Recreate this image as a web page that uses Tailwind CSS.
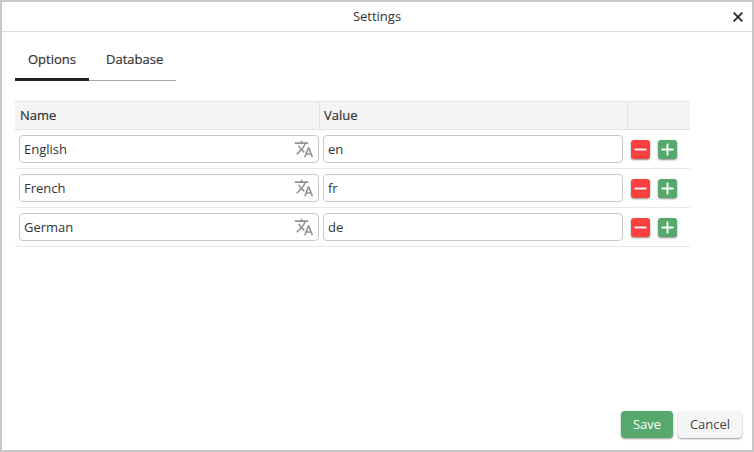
<!DOCTYPE html>
<html lang="en">
<head>
  <meta charset="UTF-8" />
  <title>Settings</title>
  <script src="https://cdn.jsdelivr.net/npm/@tailwindcss/browser@4"></script>
</head>
<body class="bg-white">

  <div class="w-[754px] h-[452px] border-2 border-[#c8c8c8] bg-white flex flex-col font-['Open_Sans',sans-serif] text-[13px] text-[#333] overflow-hidden">

    <!-- Title bar -->
    <div class="h-[30px] shrink-0 border-b border-[#ddd] flex items-center justify-center relative">
      <span class="text-[13px] leading-none -mt-[1px]">Settings</span>
      <svg class="absolute right-[9px] top-[10px] w-[10px] h-[10px]" viewBox="0 0 10 10" fill="none" stroke="#222" stroke-width="1.7"><path d="M0.7 0.7 9.3 9.3M9.3 0.7 0.7 9.3" /></svg>
    </div>

    <div class="flex-1 flex flex-col pl-[13px] pr-[10px]">
      <!-- Tabs -->
      <div class="mt-[16px] w-[161px] h-[33px] flex border-b border-[#aaa]">
        <div class="w-[74px] h-[33px] border-b-[3px] border-[#222] text-center leading-[22px] font-medium [-webkit-text-stroke:0.2px] text-[13px]">Options</div>
        <div class="w-[87px] pl-[17px] leading-[22px] font-medium [-webkit-text-stroke:0.2px] text-[13px]">Database</div>
      </div>

      <!-- Table -->
      <div class="mt-[20px] w-[675px]">
        <div class="h-[29px] flex bg-[#f4f4f4] border-y border-[#e2e2e2] font-medium [-webkit-text-stroke:0.2px] text-[13px] leading-[27px] text-[#333]">
          <div class="w-[305px] pl-[5px] border-r border-[#e2e2e2]">Name</div>
          <div class="w-[308px] pl-[4px] border-r border-[#e2e2e2]">Value</div>
          <div class="flex-1"></div>
        </div>

        <!-- English -->
        <div class="h-[39px] flex items-center border-b border-[#e8e8e8]">
          <div class="w-[300px] h-[28px] ml-[4px] rounded-[4px] border border-[#c8c8c8] flex items-center justify-between pl-[4px] pr-[3px]">
            <span class="text-[13px] pt-[1px]">English</span>
            <svg class="w-[20px] h-[20px] mr-[1px]" viewBox="0 0 24 24" fill="#919191"><path d="M12.87 15.07l-2.54-2.51.03-.03c1.74-1.94 2.98-4.17 3.71-6.53H17V4h-7V2H8v2H1v1.99h11.17C11.5 7.92 10.44 9.75 9 11.35 8.07 10.32 7.3 9.19 6.69 8h-2c.73 1.63 1.73 3.17 2.98 4.56l-5.09 5.02L4 19l5-5 3.11 3.11.76-2.04zM18.5 10h-2L12 22h2l1.12-3h4.75L21 22h2l-4.5-12zm-2.62 7l1.62-4.33L19.12 17h-3.24z" /></svg>
          </div>
          <div class="w-[300px] h-[28px] ml-[4px] rounded-[4px] border border-[#c8c8c8] flex items-center pl-[4px] pt-[1px] text-[13px]">en</div>
          <div class="ml-[8px] flex gap-[8px]">
            <div class="w-[19px] h-[19px] rounded-[3px] bg-[#fb4040] shadow-[0_1px_2px_rgba(0,0,0,0.45)] flex items-center justify-center">
              <svg class="w-[13px] h-[13px]" viewBox="0 0 13 13" stroke="#fff" stroke-width="1.8"><path d="M0.5 6.5h12" /></svg>
            </div>
            <div class="w-[19px] h-[19px] rounded-[3px] bg-[#56a86c] shadow-[0_1px_2px_rgba(0,0,0,0.45)] flex items-center justify-center">
              <svg class="w-[13px] h-[13px]" viewBox="0 0 13 13" stroke="#fff" stroke-width="1.8"><path d="M0.5 6.5h12M6.5 0.5v12" /></svg>
            </div>
          </div>
        </div>

        <!-- French -->
        <div class="h-[39px] flex items-center border-b border-[#e8e8e8]">
          <div class="w-[300px] h-[28px] ml-[4px] rounded-[4px] border border-[#c8c8c8] flex items-center justify-between pl-[4px] pr-[3px]">
            <span class="text-[13px] pt-[1px]">French</span>
            <svg class="w-[20px] h-[20px] mr-[1px]" viewBox="0 0 24 24" fill="#919191"><path d="M12.87 15.07l-2.54-2.51.03-.03c1.74-1.94 2.98-4.17 3.71-6.53H17V4h-7V2H8v2H1v1.99h11.17C11.5 7.92 10.44 9.75 9 11.35 8.07 10.32 7.3 9.19 6.69 8h-2c.73 1.63 1.73 3.17 2.98 4.56l-5.09 5.02L4 19l5-5 3.11 3.11.76-2.04zM18.5 10h-2L12 22h2l1.12-3h4.75L21 22h2l-4.5-12zm-2.62 7l1.62-4.33L19.12 17h-3.24z" /></svg>
          </div>
          <div class="w-[300px] h-[28px] ml-[4px] rounded-[4px] border border-[#c8c8c8] flex items-center pl-[4px] pt-[1px] text-[13px]">fr</div>
          <div class="ml-[8px] flex gap-[8px]">
            <div class="w-[19px] h-[19px] rounded-[3px] bg-[#fb4040] shadow-[0_1px_2px_rgba(0,0,0,0.45)] flex items-center justify-center">
              <svg class="w-[13px] h-[13px]" viewBox="0 0 13 13" stroke="#fff" stroke-width="1.8"><path d="M0.5 6.5h12" /></svg>
            </div>
            <div class="w-[19px] h-[19px] rounded-[3px] bg-[#56a86c] shadow-[0_1px_2px_rgba(0,0,0,0.45)] flex items-center justify-center">
              <svg class="w-[13px] h-[13px]" viewBox="0 0 13 13" stroke="#fff" stroke-width="1.8"><path d="M0.5 6.5h12M6.5 0.5v12" /></svg>
            </div>
          </div>
        </div>

        <!-- German -->
        <div class="h-[39px] flex items-center border-b border-[#e8e8e8]">
          <div class="w-[300px] h-[28px] ml-[4px] rounded-[4px] border border-[#c8c8c8] flex items-center justify-between pl-[4px] pr-[3px]">
            <span class="text-[13px] pt-[1px]">German</span>
            <svg class="w-[20px] h-[20px] mr-[1px]" viewBox="0 0 24 24" fill="#919191"><path d="M12.87 15.07l-2.54-2.51.03-.03c1.74-1.94 2.98-4.17 3.71-6.53H17V4h-7V2H8v2H1v1.99h11.17C11.5 7.92 10.44 9.75 9 11.35 8.07 10.32 7.3 9.19 6.69 8h-2c.73 1.63 1.73 3.17 2.98 4.56l-5.09 5.02L4 19l5-5 3.11 3.11.76-2.04zM18.5 10h-2L12 22h2l1.12-3h4.75L21 22h2l-4.5-12zm-2.62 7l1.62-4.33L19.12 17h-3.24z" /></svg>
          </div>
          <div class="w-[300px] h-[28px] ml-[4px] rounded-[4px] border border-[#c8c8c8] flex items-center pl-[4px] pt-[1px] text-[13px]">de</div>
          <div class="ml-[8px] flex gap-[8px]">
            <div class="w-[19px] h-[19px] rounded-[3px] bg-[#fb4040] shadow-[0_1px_2px_rgba(0,0,0,0.45)] flex items-center justify-center">
              <svg class="w-[13px] h-[13px]" viewBox="0 0 13 13" stroke="#fff" stroke-width="1.8"><path d="M0.5 6.5h12" /></svg>
            </div>
            <div class="w-[19px] h-[19px] rounded-[3px] bg-[#56a86c] shadow-[0_1px_2px_rgba(0,0,0,0.45)] flex items-center justify-center">
              <svg class="w-[13px] h-[13px]" viewBox="0 0 13 13" stroke="#fff" stroke-width="1.8"><path d="M0.5 6.5h12M6.5 0.5v12" /></svg>
            </div>
          </div>
        </div>
      </div>

      <!-- Footer buttons -->
      <div class="mt-auto mb-[12px] flex justify-end gap-[5px]">
        <button class="w-[52px] h-[27px] rounded-[4px] bg-[#56a86c] text-white text-[13px] shadow-[0_1px_2px_rgba(0,0,0,0.4)]">Save</button>
        <button class="w-[64px] h-[27px] rounded-[4px] bg-[#f5f5f5] text-[#444] text-[13px] shadow-[0_1px_2px_rgba(0,0,0,0.4)]">Cancel</button>
      </div>
    </div>
  </div>

</body>
</html>
